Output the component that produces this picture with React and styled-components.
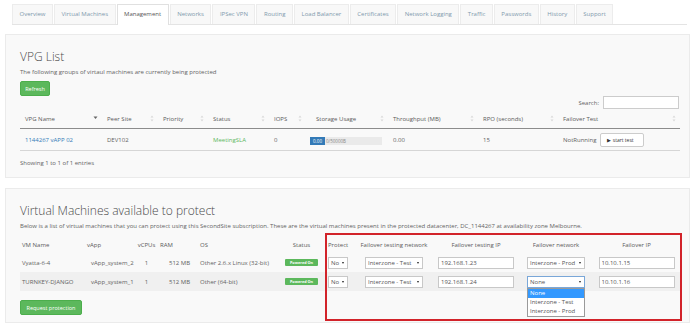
import React from "react";
import styled, { createGlobalStyle } from "styled-components";

const Global = createGlobalStyle`
  body {
    margin: 0;
    background: #fff;
    font-family: "Open Sans", "Noto Sans", sans-serif;
    font-size: 6px;
    color: #636363;
  }
`;

const tabs = [
  "Overview", "Virtual Machines", "Management", "Networks", "IPSec VPN", "Routing",
  "Load Balancer", "Certificates", "Network Logging", "Traffic", "Passwords", "History", "Support",
];

const vpgCols = [
  { label: "VPG Name", w: 82, sorted: true },
  { label: "Peer Site", w: 56 },
  { label: "Priority", w: 50 },
  { label: "Status", w: 61 },
  { label: "IOPS", w: 37 },
  { label: "Storage Usage", w: 82, pad: 10 },
  { label: "Throughput (MB)", w: 90 },
  { label: "RPO (seconds)", w: 80 },
  { label: "Failover Test", w: 122 },
];

const vmCols = [
  { label: "VM Name", w: 62, pad: 2 },
  { label: "vApp", w: 55, pad: 5 },
  { label: "vCPUs", w: 19, center: true },
  { label: "RAM", w: 40, pad: 4 },
  { label: "OS", w: 84, pad: 4 },
  { label: "Status", w: 43, center: true },
  { label: "Protect", w: 32, pad: 5 },
  { label: "Failover testing network", w: 78, center: true },
  { label: "Failover testing IP", w: 86, center: true },
  { label: "Failover network", w: 74, center: true },
  { label: "Failover IP", w: 87, center: true },
];

const vms = [
  { name: "Vyatta-6-4", vapp: "vApp_system_2", cpu: "1", ram: "512 MB", os: "Other 2.6.x Linux (32-bit)", testIp: "192.168.1.23", net: "Interzone - Prod", ip: "10.10.1.15" },
  { name: "TURNKEY-DJANGO", vapp: "vApp_system_1", cpu: "1", ram: "512 MB", os: "Other (64-bit)", testIp: "192.168.1.24", net: "None", ip: "10.10.1.16", open: true },
];

export default function App() {
  return (
    <Page>
      <Global />
      <TabBar>
        {tabs.map((t) => (
          <Tab key={t} $active={t === "Management"}>{t}</Tab>
        ))}
      </TabBar>

      <Panel $top={9} $bottom={10}>
        <Title>VPG List</Title>
        <Lead>The following groups of virtaul machines are currently being protected</Lead>
        <GreenButton>Refresh</GreenButton>
        <SearchRow>
          <span>Search:</span>
          <SearchInput />
        </SearchRow>
        <Table>
          <colgroup>
            {vpgCols.map((c) => <col key={c.label} style={{ width: c.w }} />)}
          </colgroup>
          <thead>
            <tr>
              {vpgCols.map((c) => (
                <SortTh key={c.label} $pad={c.pad}>
                  {c.label}
                  <SortIcon sorted={c.sorted} />
                </SortTh>
              ))}
            </tr>
          </thead>
          <tbody>
            <VpgRow>
              <td><Link>1144267 vAPP 02</Link></td>
              <td>DEV102</td>
              <td></td>
              <td><Ok>MeetingSLA</Ok></td>
              <td>0</td>
              <td>
                <Bar>
                  <BarFill>0.00</BarFill>
                  <BarRest>0/50000B</BarRest>
                </Bar>
              </td>
              <td>0.00</td>
              <td>15</td>
              <td>
                <TestCell>
                  NotRunning
                  <SmallButton>&#9654; start test</SmallButton>
                </TestCell>
              </td>
            </VpgRow>
          </tbody>
        </Table>
        <Info>Showing 1 to 1 of 1 entries</Info>
      </Panel>

      <Panel $top={10} $bottom={7}>
        <Title>Virtual Machines available to protect</Title>
        <Lead>
          Below is a list of virtual machines that you can protect using this SecondSite subscription. These are the virtual machines present in the protected datacenter, DC_1144267 at availability zone Melbourne.
        </Lead>
        <TableWrap>
          <Table>
            <colgroup>
              {vmCols.map((c) => <col key={c.label} style={{ width: c.w }} />)}
            </colgroup>
            <thead>
              <tr>
                {vmCols.map((c) => (
                  <VmTh key={c.label} $pad={c.pad} $center={c.center}>{c.label}</VmTh>
                ))}
              </tr>
            </thead>
            <tbody>
              {vms.map((v, i) => (
                <VmRow key={v.name} $odd={i % 2 === 1}>
                  <VmTd $pad={2}>{v.name}</VmTd>
                  <VmTd $pad={9}>{v.vapp}</VmTd>
                  <VmTd $center>{v.cpu}</VmTd>
                  <VmTd $pad={13}>{v.ram}</VmTd>
                  <VmTd $pad={4}>{v.os}</VmTd>
                  <VmTd $center><Badge>Powered On</Badge></VmTd>
                  <VmTd $pad={5}><Select $w={20}>No</Select></VmTd>
                  <VmTd $center><Select $w={58}>Interzone - Test</Select></VmTd>
                  <VmTd $center><Field defaultValue={v.testIp} /></VmTd>
                  <VmTd $center>
                    <DropWrap>
                      <Select $w={58} $focus={v.open}>{v.net}</Select>
                      {v.open && (
                        <Options>
                          <Option $selected>None</Option>
                          <Option>Interzone - Test</Option>
                          <Option>Interzone - Prod</Option>
                        </Options>
                      )}
                    </DropWrap>
                  </VmTd>
                  <VmTd $center><Field defaultValue={v.ip} /></VmTd>
                </VmRow>
              ))}
            </tbody>
          </Table>
          <Highlight />
        </TableWrap>
        <GreenButton $wide>Request protection</GreenButton>
      </Panel>
    </Page>
  );
}

function SortIcon({ sorted }) {
  return (
    <SortMark>
      {sorted ? (
        <svg width="5" height="5" viewBox="0 0 5 5"><path d="M0.5 1.5h4L2.5 4z" fill="#666" /></svg>
      ) : (
        <svg width="4" height="7" viewBox="0 0 4 7"><path d="M2 0.5L3.5 2.5h-3zM2 6.5L0.5 4.5h3z" fill="#d8d8d8" /></svg>
      )}
    </SortMark>
  );
}

const Page = styled.div`
  width: 700px;
  box-sizing: border-box;
  padding: 4px 10px 0 5px;
`;

const TabBar = styled.div`
  display: flex;
  margin: 0 3px 0 7px;
  height: 20px;
  border-bottom: 1px solid #e4e4e4;
`;

const Tab = styled.div`
  padding: 0 6.5px;
  margin-right: 1px;
  line-height: 19px;
  font-size: 6px;
  border: 1px solid ${(p) => (p.$active ? "#e0e0e0" : "#ececec")};
  border-bottom: none;
  background: ${(p) => (p.$active ? "#fff" : "#f8f8f8")};
  color: ${(p) => (p.$active ? "#555" : "#8098ad")};
  margin-bottom: ${(p) => (p.$active ? "-1px" : "0")};
  height: ${(p) => (p.$active ? "20px" : "19px")};
  white-space: nowrap;
`;

const Panel = styled.div`
  margin-top: ${(p) => p.$top}px;
  border: 1px solid #ebebeb;
  background: #f9f9f9;
  padding: 14px 9px ${(p) => p.$bottom}px 14px;
`;

const Title = styled.h2`
  margin: 0;
  font-size: 12px;
  font-weight: 300;
  line-height: 16px;
  color: #4a4a4a;
`;

const Lead = styled.p`
  margin: 3px 0 0;
  line-height: 8px;
  white-space: nowrap;
`;

const GreenButton = styled.div`
  display: inline-flex;
  align-items: center;
  justify-content: center;
  margin-top: ${(p) => (p.$wide ? 9 : 5)}px;
  width: ${(p) => (p.$wide ? 62 : 30)}px;
  height: 15px;
  border-radius: 2px;
  background: #5cb85c;
  border: 1px solid #4cae4c;
  box-sizing: border-box;
  color: #fff;
  font-size: 5.5px;
`;

const SearchRow = styled.div`
  display: flex;
  justify-content: flex-end;
  align-items: center;
  gap: 4px;
  height: 13px;
  padding-right: 1px;
`;

const SearchInput = styled.input`
  width: 76px;
  height: 13px;
  box-sizing: border-box;
  border: 1px solid #ccc;
  background: #fff;
  padding: 0;
`;

const Table = styled.table`
  width: 660px;
  table-layout: fixed;
  border-collapse: collapse;
  font-size: 6px;
`;

const SortTh = styled.th`
  position: relative;
  text-align: left;
  font-weight: 400;
  color: #5a5a5a;
  height: 19px;
  padding: 0 0 0 ${(p) => p.$pad || 5}px;
  border-bottom: 1px solid #8c8c8c;
`;

const SortMark = styled.span`
  position: absolute;
  right: 4px;
  top: 6px;
  line-height: 0;
`;

const VpgRow = styled.tr`
  height: 22px;
  border-bottom: 1px solid #d6d6d6;
  td {
    padding: 0 0 0 5px;
    vertical-align: middle;
    white-space: nowrap;
  }
`;

const Link = styled.span`
  color: #337ab7;
`;

const Ok = styled.span`
  color: #5cb85c;
`;

const Bar = styled.div`
  display: flex;
  align-items: center;
  width: 72px;
  height: 8px;
  margin: 2px 0 0 -1px;
  background: #eaeaea;
  font-size: 4.5px;
  overflow: hidden;
`;

const BarFill = styled.span`
  display: flex;
  align-items: center;
  justify-content: center;
  width: 15px;
  height: 8px;
  background: #337ab7;
  color: #fff;
`;

const BarRest = styled.span`
  color: #888;
  margin-left: 1px;
`;

const TestCell = styled.div`
  display: flex;
  align-items: center;
  gap: 4px;
`;

const SmallButton = styled.span`
  display: inline-flex;
  align-items: center;
  width: 44px;
  height: 14px;
  box-sizing: border-box;
  padding-left: 6px;
  background: #fff;
  border: 1px solid #ccc;
  border-radius: 2px;
  font-size: 5px;
  color: #333;
`;

const Info = styled.div`
  margin-top: 8px;
  line-height: 8px;
`;

const TableWrap = styled.div`
  position: relative;
  margin-top: 6px;
`;

const VmTh = styled.th`
  height: 17px;
  font-weight: 400;
  color: #5a5a5a;
  padding: 0 0 0 ${(p) => (p.$center ? 0 : p.$pad || 0)}px;
  text-align: ${(p) => (p.$center ? "center" : "left")};
  white-space: nowrap;
`;

const VmRow = styled.tr`
  height: 19px;
  background: ${(p) => (p.$odd ? "#f0f0f0" : "transparent")};
`;

const VmTd = styled.td`
  padding: 0 0 0 ${(p) => (p.$center ? 0 : p.$pad || 0)}px;
  text-align: ${(p) => (p.$center ? "center" : "left")};
  vertical-align: middle;
  white-space: nowrap;
`;

const Badge = styled.span`
  display: inline-block;
  width: 33px;
  height: 7px;
  line-height: 7px;
  border-radius: 1px;
  background: #5cb85c;
  color: #fff;
  font-size: 3.8px;
  font-weight: 700;
  vertical-align: middle;
`;

const Select = styled.div`
  display: inline-flex;
  align-items: center;
  justify-content: space-between;
  width: ${(p) => p.$w}px;
  height: 12px;
  box-sizing: border-box;
  padding: 0 3px 0 2px;
  background: #fff;
  border: 1px solid ${(p) => (p.$focus ? "#7aa7d8" : "#c8c8c8")};
  color: #555;
  font-size: 6px;
  text-align: left;
  vertical-align: middle;
  &::after {
    content: "";
    border-left: 1.5px solid transparent;
    border-right: 1.5px solid transparent;
    border-top: 2.5px solid #222;
  }
`;

const Field = styled.input`
  width: 76px;
  height: 12px;
  box-sizing: border-box;
  border: 1px solid #c8c8c8;
  background: #fff;
  padding: 0 2px;
  font-family: inherit;
  font-size: 6px;
  color: #555;
  vertical-align: middle;
`;

const DropWrap = styled.div`
  position: relative;
  display: inline-block;
  vertical-align: middle;
`;

const Options = styled.div`
  position: absolute;
  left: 0;
  top: 12px;
  width: 58px;
  box-sizing: border-box;
  background: #fff;
  border: 1px solid #9a9a9a;
  text-align: left;
  z-index: 2;
`;

const Option = styled.div`
  height: 9px;
  line-height: 9px;
  padding-left: 2px;
  font-size: 6px;
  background: ${(p) => (p.$selected ? "#3399ff" : "#fff")};
  color: ${(p) => (p.$selected ? "#fff" : "#555")};
`;

const Highlight = styled.div`
  position: absolute;
  left: 305px;
  top: -3px;
  width: 357px;
  height: 88px;
  box-sizing: border-box;
  border: 2px solid #d2232a;
  pointer-events: none;
`;
